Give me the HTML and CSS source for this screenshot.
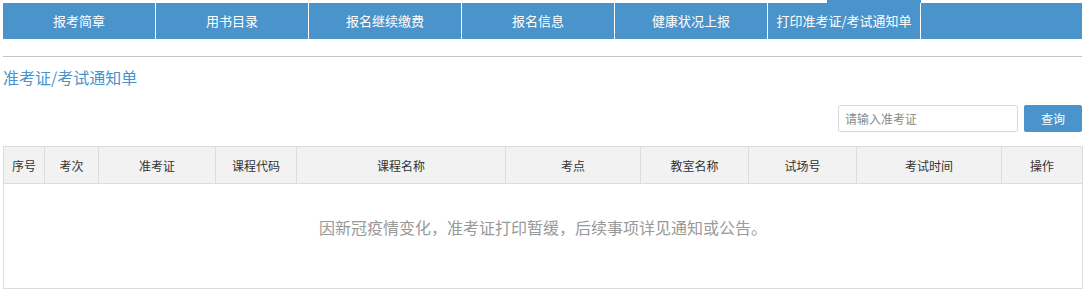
FILE: index.html
```html
<!DOCTYPE html>
<html lang="zh-CN">
<head>
<meta charset="utf-8">
<title>准考证/考试通知单</title>
<link rel="stylesheet" href="styles.css">
</head>
<body>
<div class="page">
  <nav class="nav">
    <a class="nav-item">报考简章</a>
    <a class="nav-item">用书目录</a>
    <a class="nav-item">报名继续缴费</a>
    <a class="nav-item">报名信息</a>
    <a class="nav-item">健康状况上报</a>
    <a class="nav-item active">打印准考证/考试通知单</a>
  </nav>
  <div class="rule"></div>
  <h2 class="title">准考证/考试通知单</h2>
  <div class="search">
    <input class="search-input" type="text" placeholder="请输入准考证">
    <button class="search-btn">查询</button>
  </div>
  <table class="grid">
    <colgroup>
      <col class="c1"><col class="c2"><col class="c3"><col class="c4"><col class="c5"><col class="c6"><col class="c7"><col class="c8"><col class="c9"><col>
    </colgroup>
    <thead>
      <tr>
        <th>序号</th><th>考次</th><th>准考证</th><th>课程代码</th><th>课程名称</th><th>考点</th><th>教室名称</th><th>试场号</th><th>考试时间</th><th>操作</th>
      </tr>
    </thead>
    <tbody>
      <tr><td class="empty" colspan="10">因新冠疫情变化，准考证打印暂缓，后续事项详见通知或公告。</td></tr>
    </tbody>
  </table>
</div>
</body>
</html>
```
FILE: styles.css
```css
html, body {
  margin: 0;
  padding: 0;
  background: #fff;
}
body {
  font-family: "Microsoft YaHei", "Noto Sans CJK SC", "Liberation Sans", sans-serif;
  color: #333;
}
.page {
  width: 1079px;
  padding: 3px 0 0 3px;
}
.nav {
  display: flex;
  height: 36px;
  background: #4b93cb;
}
.nav-item {
  position: relative;
  width: 152px;
  border-right: 1px solid #fff;
  color: #fff;
  font-size: 13px;
  line-height: 35px;
  text-align: center;
  text-decoration: none;
}
.nav-item.active::before {
  content: "";
  position: absolute;
  left: 59px;
  right: -1px;
  top: -3px;
  height: 3px;
  background: #4b93cb;
}
.rule {
  margin-top: 17px;
  height: 1px;
  background: #c4c4c4;
}
.title {
  margin: 9px 0 0;
  font-size: 16px;
  font-weight: normal;
  line-height: 22px;
  color: #4b93cb;
}
.search {
  display: flex;
  justify-content: flex-end;
  gap: 6px;
  margin-top: 17px;
  height: 27px;
}
.search-input {
  box-sizing: border-box;
  width: 180px;
  height: 27px;
  margin: 0;
  padding: 0 6px;
  border: 1px solid #d9d9d9;
  border-radius: 2px;
  font-family: inherit;
  font-size: 12px;
  color: #333;
  outline: none;
}
.search-input::placeholder {
  color: #8a8a8a;
}
.search-btn {
  box-sizing: border-box;
  width: 58px;
  height: 27px;
  margin: 0;
  padding: 0;
  border: 0;
  border-radius: 2px;
  background: #4b93cb;
  color: #fff;
  font-family: inherit;
  font-size: 12px;
}
.grid {
  margin-top: 14px;
  width: 1080px;
  border-collapse: collapse;
  table-layout: fixed;
}
.c1 { width: 41px; }
.c2 { width: 54px; }
.c3 { width: 117px; }
.c4 { width: 81px; }
.c5 { width: 209px; }
.c6 { width: 135px; }
.c7 { width: 108px; }
.c8 { width: 108px; }
.c9 { width: 145px; }
.grid th {
  height: 36px;
  padding: 0;
  border: 1px solid #dcdcdc;
  background: #f2f2f2;
  font-size: 12px;
  font-weight: normal;
  color: #333;
  text-align: center;
}
.grid td {
  border: 1px solid #dcdcdc;
}
.empty {
  height: 86px;
  padding: 0 0 18px;
  font-size: 16px;
  color: #999;
  text-align: center;
}
```
